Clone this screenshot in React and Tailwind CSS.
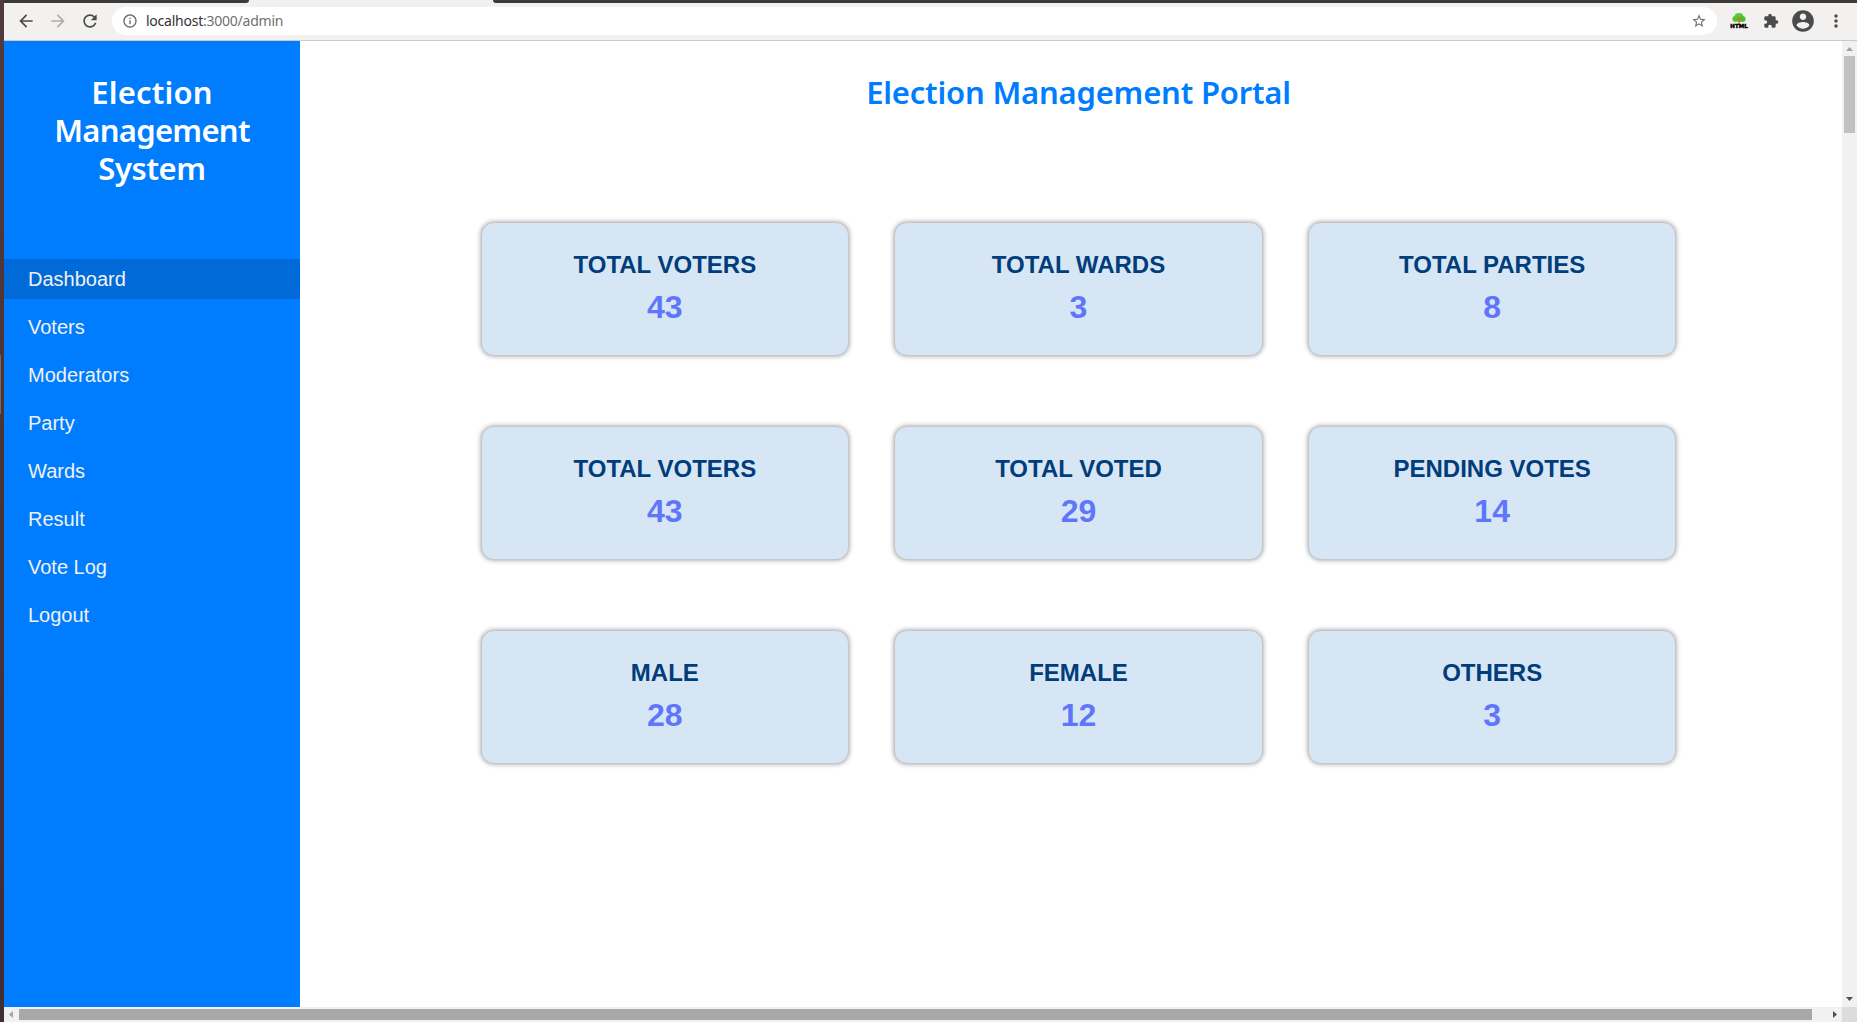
const items = ['Dashboard', 'Voters', 'Moderators', 'Party', 'Wards', 'Result', 'Vote Log', 'Logout'];

const stats = [
  ['TOTAL VOTERS', 43],
  ['TOTAL WARDS', 3],
  ['TOTAL PARTIES', 8],
  ['TOTAL VOTERS', 43],
  ['TOTAL VOTED', 29],
  ['PENDING VOTES', 14],
  ['MALE', 28],
  ['FEMALE', 12],
  ['OTHERS', 3],
];

function Icon({ d, className }) {
  return (
    <svg viewBox="0 0 24 24" className={className} fill="currentColor">
      <path d={d} />
    </svg>
  );
}

function TabStrip() {
  return (
    <div className="flex h-[3px] shrink-0 bg-[#f2f1f0]">
      <div className="w-[245px] rounded-br-[3px] bg-[#3c3b37]" />
      <div className="w-[244px]" />
      <div className="flex-1 rounded-bl-[3px] bg-[#3c3b37]" />
    </div>
  );
}

function TreeIcon() {
  return (
    <div className="flex w-4 flex-col items-center">
      <svg viewBox="0 0 16 12" className="h-3 w-4">
        <ellipse cx="8" cy="3.3" rx="4.3" ry="3.3" fill="#5ccb35" />
        <ellipse cx="4.700" cy="6" rx="3.300" ry="2.9" fill="#55c431" />
        <ellipse cx="11.300" cy="6" rx="3.300" ry="2.9" fill="#4fbd2d" />
        <path d="M7.400 4h1.300v8H7.400z" fill="#d2691e" />
        <path d="M5 6.500 8 9M11 6.500 8.400 9" stroke="#b7751f" strokeWidth=".7" />
      </svg>
      <span className="-mt-px font-['DejaVu_Sans',sans-serif] text-[5.5px] leading-[5px] font-bold text-black [-webkit-text-stroke:0.5px_black]">HTML</span>
    </div>
  );
}

function Toolbar() {
  return (
    <div className="flex h-[38px] shrink-0 items-center border-b border-[#cbcaca] bg-[#f2f1f0] pb-px pl-3 text-[#4a4b4a]">
      <Icon className="size-5" d="M20 11H7.83l5.59-5.59L12 4l-8 8 8 8 1.41-1.41L7.83 13H20v-2z" />
      <Icon className="ml-3 size-5 text-[#adadac]" d="M12 4l-1.41 1.41L16.17 11H4v2h12.17l-5.58 5.59L12 20l8-8z" />
      <Icon className="ml-3 size-5" d="M17.65 6.35C16.2 4.9 14.21 4 12 4c-4.42 0-7.99 3.58-7.99 8s3.57 8 7.99 8c3.73 0 6.84-2.55 7.73-6h-2.08c-.82 2.33-3.04 4-5.65 4-3.31 0-6-2.69-6-6s2.69-6 6-6c1.66 0 3.14.69 4.22 1.78L13 11h7V4l-2.35 2.35z" />
      <div className="ml-3 flex h-7 w-[1605px] items-center rounded-full bg-white pr-[10px] pl-[10px]">
        <Icon className="size-4 text-[#696a69]" d="M11 7h2v2h-2zm0 4h2v6h-2zm1-9C6.48 2 2 6.48 2 12s4.48 10 10 10 10-4.48 10-10S17.52 2 12 2zm0 18c-4.41 0-8-3.59-8-8s3.59-8 8-8 8 3.59 8 8-3.59 8-8 8z" />
        <span className="ml-2 pb-px font-['Noto_Sans',sans-serif] text-[14px] tracking-[-0.24px] text-[#333]">
          localhost<span className="text-[#707070]">:3000/admin</span>
        </span>
        <Icon className="ml-auto size-4 text-[#696a69]" d="M22 9.24l-7.19-.62L12 2 9.19 8.63 2 9.24l5.46 4.73L5.82 21 12 17.27 18.18 21l-1.63-7.03L22 9.24zM12 15.4l-3.76 2.27 1-4.28-3.32-2.88 4.38-.38L12 6.1l1.71 4.04 4.38.38-3.32 2.88 1 4.28L12 15.4z" />
      </div>
      <div className="ml-[14px]"><TreeIcon /></div>
      <Icon className="ml-[16px] size-4" d="M20.5 11H19V7c0-1.1-.9-2-2-2h-4V3.5C13 2.12 11.88 1 10.5 1S8 2.12 8 3.5V5H4c-1.1 0-1.99.9-1.99 2v3.8H3.5c1.49 0 2.7 1.21 2.7 2.7s-1.21 2.7-2.7 2.7H2V20c0 1.1.9 2 2 2h3.8v-1.5c0-1.49 1.21-2.7 2.7-2.7 1.49 0 2.7 1.21 2.7 2.7V22H17c1.1 0 2-.9 2-2v-4h1.5c1.38 0 2.5-1.12 2.5-2.5S21.88 11 20.5 11z" />
      <Icon className="ml-[11px] size-[26px]" d="M12 2C6.48 2 2 6.48 2 12s4.48 10 10 10 10-4.48 10-10S17.52 2 12 2zm0 3c1.66 0 3 1.34 3 3s-1.34 3-3 3-3-1.34-3-3 1.34-3 3-3zm0 14.200c-2.500 0-4.710-1.280-6-3.220.030-1.990 4-3.080 6-3.080 1.990 0 5.970 1.090 6 3.080-1.290 1.940-3.500 3.220-6 3.220z" />
      <Icon className="ml-[10px] size-5" d="M12 8c1.100 0 2-.9 2-2s-.9-2-2-2-2 .9-2 2 .9 2 2 2zm0 2c-1.100 0-2 .9-2 2s.9 2 2 2 2-.9 2-2-.9-2-2-2zm0 6c-1.100 0-2 .9-2 2s.9 2 2 2 2-.9 2-2-.9-2-2-2z" />
    </div>
  );
}

function Sidebar() {
  return (
    <aside className="flex w-[296px] shrink-0 flex-col bg-[#007dff] pt-8">
      <h2 className="px-8 text-center font-['Noto_Sans',sans-serif] text-[31px] leading-[38px] font-semibold text-white">
        <span className="tracking-[0.2px]">Election</span><br />
        <span className="tracking-[-0.7px]">Management</span><br />
        <span className="tracking-[-0.4px]">System</span>
      </h2>
      <nav className="mt-[72px] flex flex-col gap-2">
        {items.map((label, i) => (
          <a
            key={label}
            className={
              i === 0
                ? 'flex h-10 items-center bg-[#006ad9] pl-6 text-xl text-[#f1f1f1]'
                : 'flex h-10 items-center pl-6 text-xl text-[#f1f1f1]'
            }
          >
            {label}
          </a>
        ))}
      </nav>
    </aside>
  );
}

function Card({ title, value }) {
  return (
    <div className="flex h-[134px] flex-col items-center rounded-[13px] border border-[#c6c6c8] bg-[#d7e6f5] pt-6 font-bold shadow-[0_0_5px_rgba(0,0,0,0.4)]">
      <div className="text-2xl leading-9 text-[#003d7a]">{title}</div>
      <div className="text-[32px] leading-[48px] text-[#5f76fb]">{value}</div>
    </div>
  );
}

function Main() {
  return (
    <main className="flex flex-1 flex-col items-center bg-white pt-8 pl-[15px]">
      <h1 className="font-['Noto_Sans',sans-serif] text-[31px] leading-[38.4px] font-semibold tracking-[-0.2px] whitespace-nowrap text-[#007dff]">
        Election Management Portal
      </h1>
      <div className="mt-[111px] grid w-[1196px] grid-cols-3 gap-x-[45px] gap-y-[70px]">
        {stats.map(([title, value], i) => (
          <Card key={i} title={title} value={value} />
        ))}
      </div>
    </main>
  );
}

function Arrow({ points, color }) {
  return (
    <svg viewBox="0 0 15 15" className="size-[15px] shrink-0" fill={color}>
      <polygon points={points} />
    </svg>
  );
}

export default function App() {
  return (
    <div className="flex h-[1022px] w-[1857px] overflow-hidden font-['Liberation_Sans',Arial,sans-serif]">
      <div className="flex w-1 shrink-0 flex-col bg-linear-to-b from-[#54393d] to-[#3f2e33]">
        <div className="mt-[355px] h-[59px] w-px bg-[#79666a]" />
      </div>
      <div className="flex min-w-0 flex-1 flex-col">
        <TabStrip />
        <Toolbar />
        <div className="flex h-[966px] shrink-0">
          <Sidebar />
          <Main />
          <div className="flex w-[15px] flex-col items-center bg-[#f1f1f1]">
            <Arrow points="4,10 11,10 7.5,6" color="#a3a3a3" />
            <div className="h-[77px] w-[11px] bg-[#c1c1c1]" />
            <div className="mt-auto"><Arrow points="4,5 11,5 7.5,9" color="#505050" /></div>
          </div>
        </div>
        <div className="flex h-[15px] shrink-0 items-center bg-[#f1f1f1]">
          <Arrow points="9,4 9,11 5,7.500" color="#a3a3a3" />
          <div className="h-[11px] w-[1793px] bg-[#a8a8a8]" />
          <div className="ml-auto"><Arrow points="6,4 6,11 10,7.500" color="#505050" /></div>
          <div className="size-[15px] bg-[#dcdcdc]" />
        </div>
      </div>
    </div>
  );
}
